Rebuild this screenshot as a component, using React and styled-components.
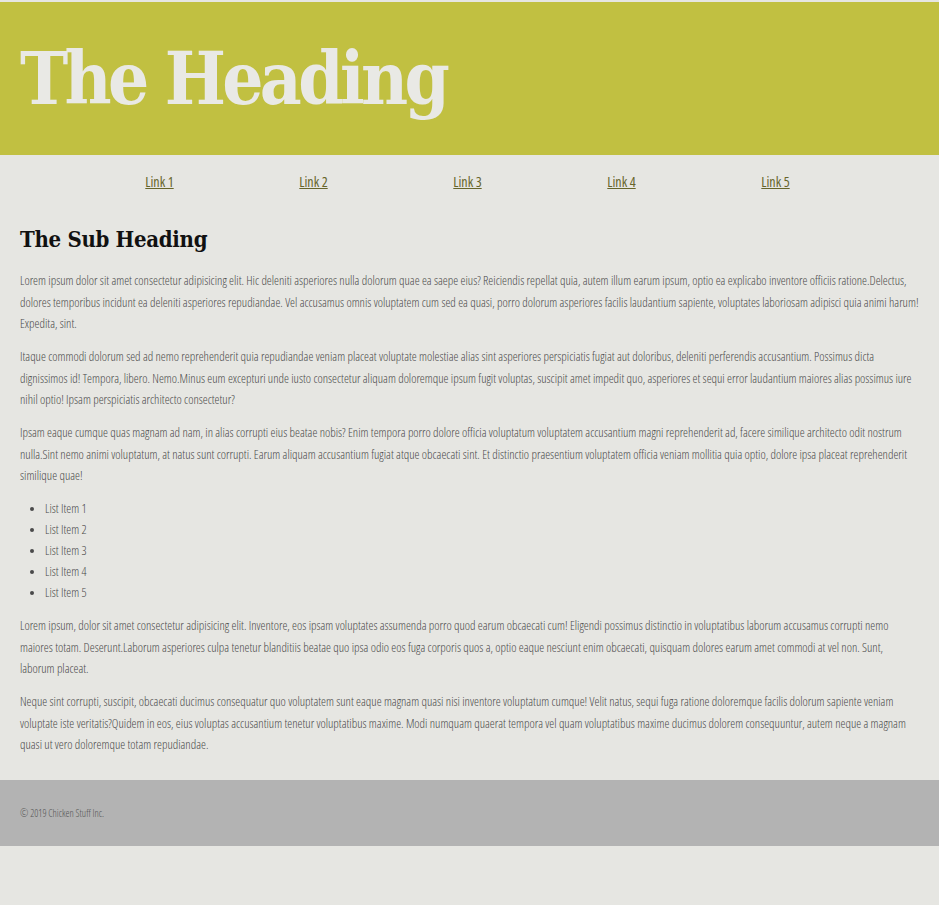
import React from "react";
import styled, { createGlobalStyle } from "styled-components";

const links = ["Link 1", "Link 2", "Link 3", "Link 4", "Link 5"];
const items = ["List Item 1", "List Item 2", "List Item 3", "List Item 4", "List Item 5"];

function App() {
  return (
    <>
      <GlobalStyle />
      <Page>
        <Header>
          <Title>The Heading</Title>
        </Header>

        <Nav>
          {links.map((l) => (
            <NavItem key={l}>
              <NavLink href="#">{l}</NavLink>
            </NavItem>
          ))}
        </Nav>

        <Main>
          <SubHeading>The Sub Heading</SubHeading>
          <Text>
            Lorem ipsum dolor sit amet consectetur adipisicing elit. Hic deleniti asperiores nulla dolorum quae ea saepe eius? Reiciendis repellat quia, autem illum earum ipsum, optio ea explicabo inventore officiis ratione.Delectus, dolores temporibus incidunt ea deleniti asperiores repudiandae. Vel accusamus omnis voluptatem cum sed ea quasi, porro dolorum asperiores facilis laudantium sapiente, voluptates laboriosam adipisci quia animi harum! Expedita, sint.
          </Text>
          <Text>
            Itaque commodi dolorum sed ad nemo reprehenderit quia repudiandae veniam placeat voluptate molestiae alias sint asperiores perspiciatis fugiat aut doloribus, deleniti perferendis accusantium. Possimus dicta dignissimos id! Tempora, libero. Nemo.Minus eum excepturi unde iusto consectetur aliquam doloremque ipsum fugit voluptas, suscipit amet impedit quo, asperiores et sequi error laudantium maiores alias possimus iure nihil optio! Ipsam perspiciatis architecto consectetur?
          </Text>
          <Text>
            Ipsam eaque cumque quas magnam ad nam, in alias corrupti eius beatae nobis? Enim tempora porro dolore officia voluptatum voluptatem accusantium magni reprehenderit ad, facere similique architecto odit nostrum nulla.Sint nemo animi voluptatum, at natus sunt corrupti. Earum aliquam accusantium fugiat atque obcaecati sint. Et distinctio praesentium voluptatem officia veniam mollitia quia optio, dolore ipsa placeat reprehenderit similique quae!
          </Text>
          <List>
            {items.map((i) => (
              <ListItem key={i}>{i}</ListItem>
            ))}
          </List>
          <Text>
            Lorem ipsum, dolor sit amet consectetur adipisicing elit. Inventore, eos ipsam voluptates assumenda porro quod earum obcaecati cum! Eligendi possimus distinctio in voluptatibus laborum accusamus corrupti nemo maiores totam. Deserunt.Laborum asperiores culpa tenetur blanditiis beatae quo ipsa odio eos fuga corporis quos a, optio eaque nesciunt enim obcaecati, quisquam dolores earum amet commodi at vel non. Sunt, laborum placeat.
          </Text>
          <Text>
            Neque sint corrupti, suscipit, obcaecati ducimus consequatur quo voluptatem sunt eaque magnam quasi nisi inventore voluptatum cumque! Velit natus, sequi fuga ratione doloremque facilis dolorum sapiente veniam voluptate iste veritatis?Quidem in eos, eius voluptas accusantium tenetur voluptatibus maxime. Modi numquam quaerat tempora vel quam voluptatibus maxime ducimus dolorem consequuntur, autem neque a magnam quasi ut vero doloremque totam repudiandae.
          </Text>
        </Main>

        <Footer>
          <Copy>&copy; 2019 Chicken Stuff Inc.</Copy>
        </Footer>
      </Page>
    </>
  );
}

export default App;

const GlobalStyle = createGlobalStyle`
html, body {
  margin:0;
  padding:0;
  background:#e6e6e2;
}
body {
  font-family:'Open Sans', 'Liberation Sans Narrow', sans-serif;
  font-stretch:condensed;
  font-weight:300;
  color:#4a4a4a;
}
`;

const Page = styled.div`
padding-top:2px;
`;

const Header = styled.header`
background:#c1c041;
height:153px;
display:flex;
align-items:center;
padding-left:20px;
`;

const Title = styled.h1`
margin:0;
font-family:'DejaVu Serif', serif;
font-stretch:condensed;
font-weight:700;
font-size:72px;
letter-spacing:-3.6px;
line-height:1;
color:#e9e9e5;
`;

const Nav = styled.nav`
display:flex;
justify-content:center;
align-items:center;
height:52px;
padding-right:4px;
`;

const NavItem = styled.div`
width:154px;
text-align:center;
`;

const NavLink = styled.a`
font-size:14px;
font-weight:400;
color:#66652b;
text-decoration:underline;
`;

const Main = styled.main`
padding:19px 20px 13px 20px;
`;

const SubHeading = styled.h2`
margin:0 0 18px 0;
font-family:'DejaVu Serif', serif;
font-stretch:condensed;
font-weight:700;
font-size:22px;
letter-spacing:-0.3px;
line-height:26px;
color:#111;
`;

const Text = styled.p`
margin:0 0 11.5px 0;
font-size:12.5px;
line-height:21.5px;
`;

const List = styled.ul`
margin:0 0 12px 0;
padding-left:25px;
`;

const ListItem = styled.li`
font-size:12.5px;
line-height:21px;
`;

const Footer = styled.footer`
background:#b3b3b3;
height:66px;
display:flex;
align-items:center;
padding-left:20px;
`;

const Copy = styled.small`
font-size:10px;
color:#555;
`;
